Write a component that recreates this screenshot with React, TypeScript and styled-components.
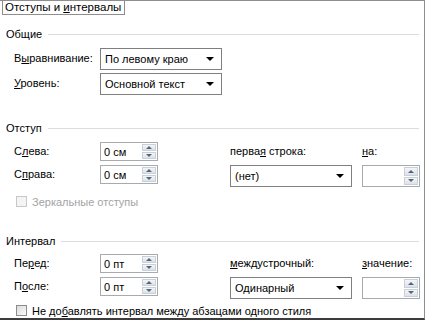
import React from 'react'
import styled, { createGlobalStyle } from 'styled-components'

const Global = createGlobalStyle`
  body {
    margin: 0;
    background: #fff;
    font-family: "Liberation Sans", Arial, sans-serif;
    font-size: 11px;
    color: #000;
  }
`

const Page = styled.div`
  width: 424px;
  height: 317px;
  border-top: 1px solid #8e8e8e;
  border-right: 1px solid #8e8e8e;
  border-bottom: 2px solid #3c3c3c;
  background: #fff;
`

const Tab = styled.div`
  display: inline-block;
  margin-left: 2px;
  height: 13px;
  padding: 0 3px 0 2px;
  line-height: 13px;
  font-size: 11.5px;
  border: 1px solid #8e8e8e;
  border-top: none;
  white-space: nowrap;
`

const Section = styled.div<{ top: number }>`
  margin-top: ${(props) => props.top}px;
`

const Header = styled.div`
  display: flex;
  align-items: center;
  height: 12px;
  padding: 0 5px 0 6px;
  gap: 6px;
  line-height: 12px;
`

const Rule = styled.div`
  flex: 1;
  height: 1px;
  background: #dcdcdc;
`

const Rows = styled.div<{ top: number }>`
  display: flex;
  flex-direction: column;
  gap: 4px;
  margin-top: ${(props) => props.top}px;
  padding-left: 14px;
`

const Row = styled.div`
  display: flex;
  align-items: center;
  height: 21px;
`

const Label = styled.div<{ width?: number }>`
  width: ${(props) => (props.width ? `${props.width}px` : 'auto')};
  white-space: nowrap;
  line-height: 13px;
`

const Grid = styled.div<{ top: number }>`
  display: grid;
  grid-template-columns: 86px 130px 132px 58px;
  grid-template-rows: 23px 23px;
  margin-top: ${(props) => props.top}px;
  padding-left: 14px;
`

const Cell = styled.div`
  display: flex;
  align-items: flex-start;
`

const CellLabel = styled.div`
  height: 19px;
  line-height: 19px;
  white-space: nowrap;
`

const Select = styled.div<{ width: number }>`
  position: relative;
  box-sizing: border-box;
  width: ${(props) => props.width}px;
  height: 22px;
  border: 1px solid #7f7f7f;
  background: #fff;
  line-height: 20px;
  padding-left: 4px;
  white-space: nowrap;
`

const Arrow = styled.div`
  position: absolute;
  right: 7px;
  top: 8px;
  width: 0;
  height: 0;
  border-left: 4px solid transparent;
  border-right: 4px solid transparent;
  border-top: 4px solid #000;
`

const Spin = styled.div<{ width: number; height: number }>`
  box-sizing: border-box;
  width: ${(props) => props.width}px;
  height: ${(props) => props.height}px;
  border: 1px solid #a7abb0;
  background: #fff;
  display: flex;
  align-items: stretch;
`

const SpinText = styled.div`
  flex: 1;
  display: flex;
  align-items: center;
  padding-left: 3px;
  white-space: nowrap;
`

const SpinButtons = styled.div`
  width: 14px;
  margin: 1px 1px 1px 0;
  display: flex;
  flex-direction: column;
  gap: 1px;
`

const SpinButton = styled.div<{ down?: boolean }>`
  flex: 1;
  background: linear-gradient(#f3f5f8, #dde2e9);
  border: 1px solid #c9d0d8;
  display: flex;
  align-items: center;
  justify-content: center;

  &::after {
    content: '';
    width: 0;
    height: 0;
    border-left: 3px solid transparent;
    border-right: 3px solid transparent;
    ${(props) =>
      props.down
        ? 'border-top: 3px solid #55667a;'
        : 'border-bottom: 3px solid #55667a;'}
  }
`

const CheckRow = styled.div<{ top: number; disabled?: boolean }>`
  display: flex;
  align-items: center;
  gap: 5px;
  margin-top: ${(props) => props.top}px;
  padding-left: 16px;
  height: 13px;
  color: ${(props) => (props.disabled ? '#a3a3a3' : '#000')};
  white-space: nowrap;
`

const Box = styled.div<{ disabled?: boolean }>`
  box-sizing: border-box;
  width: 11px;
  height: 11px;
  border: 1px solid ${(props) => (props.disabled ? '#c8c8c8' : '#8c8c8c')};
  background: ${(props) =>
    props.disabled ? '#f4f4f4' : 'linear-gradient(135deg, #dcdcdc, #fafafa)'};
`

const SpinBox = ({ value, width, height }: { value: string; width: number; height: number }) => (
  <Spin width={width} height={height}>
    <SpinText>{value}</SpinText>
    <SpinButtons>
      <SpinButton />
      <SpinButton down />
    </SpinButtons>
  </Spin>
)

const Dropdown = ({ value, width }: { value: string; width: number }) => (
  <Select width={width}>
    {value}
    <Arrow />
  </Select>
)

const App = () => (
  <Page>
    <Global />
    <Tab>
      Отступы и <u>и</u>нтервалы
    </Tab>

    <Section top={13}>
      <Header>
        Общие
        <Rule />
      </Header>
      <Rows top={8}>
        <Row>
          <Label width={86}>
            В<u>ы</u>равнивание:
          </Label>
          <Dropdown value="По левому краю" width={122} />
        </Row>
        <Row>
          <Label width={86}>
            <u>У</u>ровень:
          </Label>
          <Dropdown value="Основной текст" width={122} />
        </Row>
      </Rows>
    </Section>

    <Section top={28}>
      <Header>
        Отступ
        <Rule />
      </Header>
      <Grid top={8}>
        <Cell>
          <CellLabel>
            С<u>л</u>ева:
          </CellLabel>
        </Cell>
        <Cell>
          <SpinBox value="0 см" width={58} height={19} />
        </Cell>
        <Cell>
          <CellLabel>
            перва<u>я</u> строка:
          </CellLabel>
        </Cell>
        <Cell>
          <CellLabel>
            <u>н</u>а:
          </CellLabel>
        </Cell>
        <Cell>
          <CellLabel>
            С<u>п</u>рава:
          </CellLabel>
        </Cell>
        <Cell>
          <SpinBox value="0 см" width={58} height={19} />
        </Cell>
        <Cell>
          <Dropdown value="(нет)" width={122} />
        </Cell>
        <Cell>
          <SpinBox value="" width={58} height={22} />
        </Cell>
      </Grid>
      <CheckRow top={7} disabled>
        <Box disabled />
        <span>Зеркальные отступы</span>
      </CheckRow>
    </Section>

    <Section top={27}>
      <Header>
        Интервал
        <Rule />
      </Header>
      <Grid top={7}>
        <Cell>
          <CellLabel>
            Пе<u>р</u>ед:
          </CellLabel>
        </Cell>
        <Cell>
          <SpinBox value="0 пт" width={58} height={19} />
        </Cell>
        <Cell>
          <CellLabel>
            <u>м</u>еждустрочный:
          </CellLabel>
        </Cell>
        <Cell>
          <CellLabel>
            <u>з</u>начение:
          </CellLabel>
        </Cell>
        <Cell>
          <CellLabel>
            П<u>о</u>сле:
          </CellLabel>
        </Cell>
        <Cell>
          <SpinBox value="0 пт" width={58} height={19} />
        </Cell>
        <Cell>
          <Dropdown value="Одинарный" width={122} />
        </Cell>
        <Cell>
          <SpinBox value="" width={58} height={22} />
        </Cell>
      </Grid>
      <CheckRow top={4}>
        <Box />
        <span>
          Не до<u>б</u>авлять интервал между абзацами одного стиля
        </span>
      </CheckRow>
    </Section>
  </Page>
)

export default App
